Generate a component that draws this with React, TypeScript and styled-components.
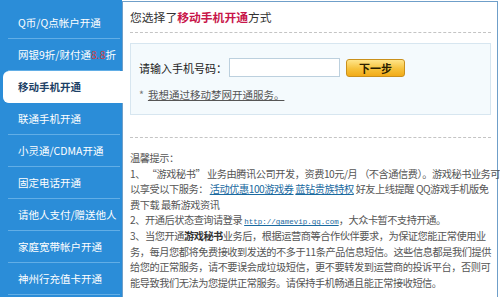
import React from "react";
import styled, { createGlobalStyle } from "styled-components";

const Global = createGlobalStyle`
  html, body { margin: 0; padding: 0; background: #fff; }
  body { font-family: "Noto Sans CJK SC", "DejaVu Sans", sans-serif; font-size: 12px; }
`;

const Page = styled.div`
  display: flex;
  width: 500px;
  height: 297px;
  overflow: hidden;
  background: #fff;
`;

const Sidebar = styled.ul`
  list-style: none;
  margin: 0;
  padding: 7px 0 0 0;
  width: 122px;
  flex: none;
  background: #2b8dd8;
  display: flex;
  flex-direction: column;
`;

const NavItem = styled.li<{ $active?: boolean }>`
  height: 31px;
  display: flex;
  align-items: center;
  padding-left: ${(p) => (p.$active ? "15px" : "10px")};
  margin-left: ${(p) => (p.$active ? "3px" : "8px")};
  margin-right: ${(p) => (p.$active ? "-1px" : "2px")};
  border-bottom: 1px solid ${(p) => (p.$active ? "#fff" : "#62aee6")};
  background: ${(p) => (p.$active ? "#fff" : "transparent")};
  border-radius: ${(p) => (p.$active ? "6px 0 0 6px" : "0")};
  color: ${(p) => (p.$active ? "#1c3f66" : "#fff")};
  font-weight: ${(p) => (p.$active ? "bold" : "normal")};
  font-size: 10.5px;
  white-space: nowrap;
  position: relative;
  z-index: 1;
`;

const Red = styled.span`
  color: #c8444a;
`;

const Main = styled.div`
  flex: 1;
  margin-top: 1px;
  margin-right: 2px;
  border: 1px solid #6f9fc9;
  border-bottom: none;
  padding: 0 6px 0 7px;
  color: #555;
  display: flex;
  flex-direction: column;
  min-width: 0;
`;

const Title = styled.div`
  padding-top: 7px;
  padding-bottom: 7px;
  line-height: 16px;
  font-size: 11.8px;
  color: #333;
  border-bottom: 1px dashed #c4c4c4;
  white-space: nowrap;
`;

const Hot = styled.span`
  color: #c8164a;
  font-weight: bold;
`;

const FormBox = styled.div`
  margin-top: 10px;
  height: 72px;
  border: 1px solid #d7e6f0;
  background: #f4fafd;
  padding: 14px 0 0 8px;
  box-sizing: border-box;
`;

const FormRow = styled.div`
  display: flex;
  align-items: center;
  height: 19px;
`;

const Label = styled.span`
  width: 90px;
  color: #222;
  font-size: 11px;
  white-space: nowrap;
`;

const PhoneInput = styled.input`
  width: 111px;
  height: 19px;
  box-sizing: border-box;
  border: 1px solid #bcd0de;
  background: #fff;
  padding: 0 3px;
  outline: none;
`;

const NextButton = styled.button`
  margin-left: 6px;
  width: 59px;
  height: 18px;
  box-sizing: border-box;
  border: 1px solid #c9901c;
  border-radius: 3px;
  background: linear-gradient(#ffe58a, #f6c23c 55%, #f2ab18);
  color: #2a1e00;
  font-family: inherit;
  font-weight: bold;
  font-size: 11px;
  line-height: 14px;
  padding: 0;
  cursor: pointer;
`;

const AltRow = styled.div`
  margin-top: 10px;
  line-height: 16px;
  font-size: 10.5px;
  color: #555;
  display: flex;
  gap: 4px;
`;

const Star = styled.span`
  color: #777;
`;

const AltLink = styled.a`
  color: #555;
  text-decoration: underline;
`;

const Divider = styled.div`
  margin-top: 22px;
  border-bottom: 1px dashed #c4c4c4;
`;

const Tips = styled.div`
  padding-top: 12px;
  line-height: 15.6px;
  font-size: 10.2px;
  letter-spacing: -0.45px;
  color: #555;
  white-space: nowrap;
`;

const TipLine = styled.div`
  height: 15.6px;
  line-height: 15.6px;
`;

const TipLink = styled.a`
  color: #1a6aa0;
  text-decoration: underline;
`;

const UrlLink = styled.a`
  color: #1a6aa0;
  text-decoration: underline;
  font-family: "Liberation Mono", "DejaVu Sans Mono", monospace;
  font-size: 7.5px;
  letter-spacing: 0;
  line-height: 8px;
`;

const Strong = styled.b`
  color: #333;
`;

const navItems: { label: React.ReactNode; active?: boolean }[] = [
  { label: "Q币/Q点帐户开通" },
  {
    label: (
      <>
        网银9折/财付通<Red>8.8</Red>折
      </>
    ),
  },
  { label: "移动手机开通", active: true },
  { label: "联通手机开通" },
  { label: "小灵通/CDMA开通" },
  { label: "固定电话开通" },
  { label: "请他人支付/赠送他人" },
  { label: "家庭宽带帐户开通" },
  { label: "神州行充值卡开通" },
];

export default function App() {
  return (
    <>
      <Global />
      <Page>
        <Sidebar>
          {navItems.map((n, i) => (
            <NavItem key={i} $active={n.active}>
              {n.label}
            </NavItem>
          ))}
        </Sidebar>
        <Main>
          <Title>
            您选择了<Hot>移动手机开通</Hot>方式
          </Title>
          <FormBox>
            <FormRow>
              <Label>请输入手机号码：</Label>
              <PhoneInput />
              <NextButton>下一步</NextButton>
            </FormRow>
            <AltRow>
              <Star>*</Star>
              <AltLink href="#">我想通过移动梦网开通服务。</AltLink>
            </AltRow>
          </FormBox>
          <Divider />
          <Tips>
            <TipLine>温馨提示：</TipLine>
            <TipLine>
              1、 “游戏秘书” 业务由腾讯公司开发，资费10元/月 （不含通信费）。游戏秘书业务可
            </TipLine>
            <TipLine>
              以享受以下服务： <TipLink href="#">活动优惠100游戏券</TipLink>{" "}
              <TipLink href="#">蓝钻贵族特权</TipLink> 好友上线提醒 QQ游戏手机版免
            </TipLine>
            <TipLine>费下载 最新游戏资讯</TipLine>
            <TipLine>
              2、开通后状态查询请登录 <UrlLink href="#">http://gamevip.qq.com</UrlLink>，大众卡暂不支持开通。
            </TipLine>
            <TipLine>
              3、当您开通<Strong>游戏秘书</Strong>业务后，根据运营商等合作伙伴要求，为保证您能正常使用业
            </TipLine>
            <TipLine>务，每月您都将免费接收到发送的不多于11条产品信息短信。这些信息都是我们提供</TipLine>
            <TipLine>给您的正常服务，请不要误会成垃圾短信，更不要转发到运营商的投诉平台，否则可</TipLine>
            <TipLine>能导致我们无法为您提供正常服务。请保持手机畅通且能正常接收短信。</TipLine>
          </Tips>
        </Main>
      </Page>
    </>
  );
}
